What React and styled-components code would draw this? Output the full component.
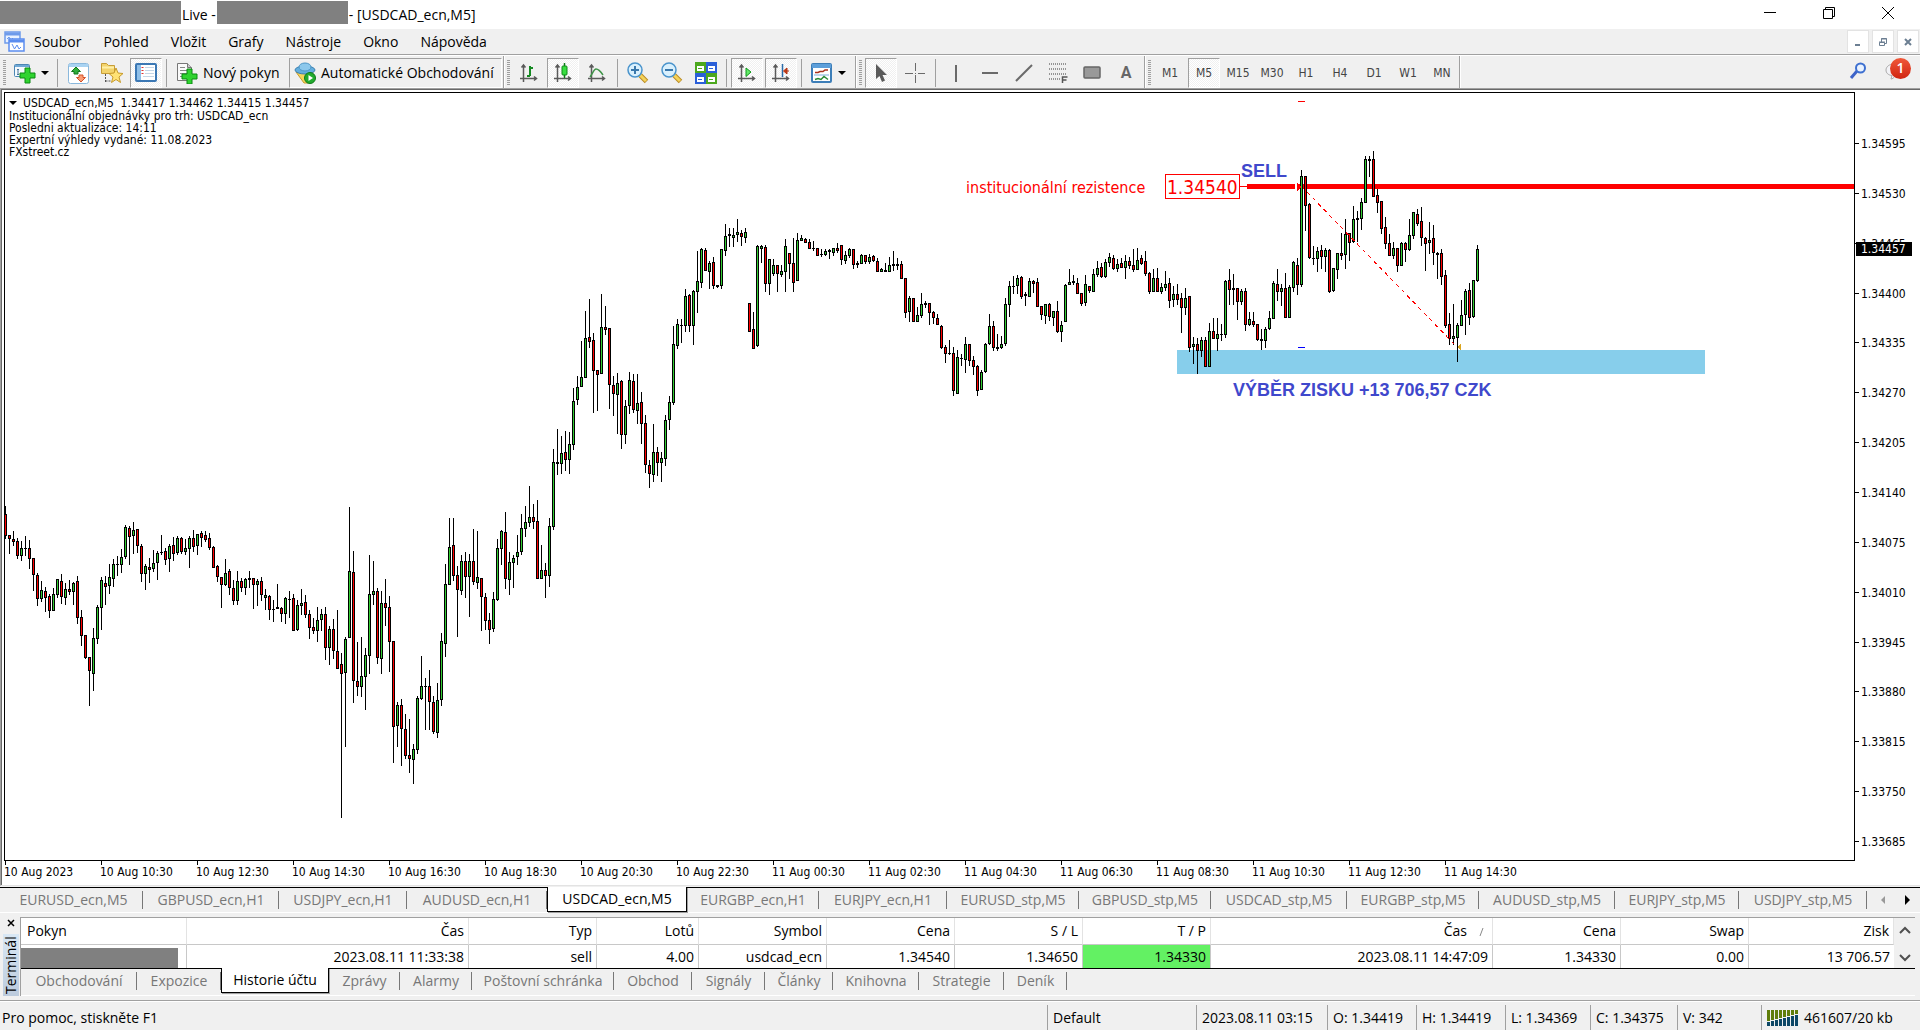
//Library
import styled, { createGlobalStyle, css } from "styled-components";
import { useState } from "react";

//Candles, four pixels apart. Each one is: high, body top, body bottom, low, kind
//(g = up, r = down, d = doji), in thirds of a pixel below the base of its block.
const blocks = [
  {
    base: 387,
    rows: `78 102 168 177 r,165 165 177 222 r,153 177 186 198 r,174 183 228 237 r,183 204 228 243 g,
168 204 207 228 d,180 204 237 267 r,234 234 285 333 r,279 285 357 378 r,303 330 357 366 g,
321 333 354 396 r,342 348 393 414 r,324 342 393 393 g,297 297 345 354 g,282 303 351 372 r,
309 327 354 375 g,300 327 336 345 r,306 309 336 375 g,288 303 414 432 r,390 411 468 498 r,
465 465 534 537 r,531 531 573 678 r,444 474 582 633 g,375 381 477 492 g,291 300 384 450 g,
288 309 321 375 r,252 291 318 342 g,237 252 297 321 g,228 252 255 288 d,207 231 255 279 g,
135 141 231 237 g,138 144 171 255 r,126 150 168 222 g,147 147 198 219 r,192 198 282 306 r,
252 258 282 330 g,234 261 270 309 r,210 249 267 276 g,213 219 249 300 g,165 216 219 225 d,
204 213 240 255 r,192 198 237 276 g,171 195 222 243 r,168 174 219 225 g,171 174 216 222 r,
177 204 216 225 g,168 174 207 264 g,150 174 201 216 r,162 162 198 225 g,153 159 174 201 r,
153 165 180 186 r,159 174 204 210 r,198 201 264 264 r,255 258 291 306 r,291 291 315 384 r,
237 279 315 318 g,267 273 324 345 r,300 324 363 375 r,273 303 363 375 g,294 303 324 336 r,
294 297 324 345 g,273 294 300 324 d,294 294 315 387 r,297 303 315 378 g,291 303 345 363 r,
327 345 354 390 g,345 348 390 420 r,360 387 390 426 d,312 381 387 387 d,381 384 402 426 r,
351 354 402 432 g,333 357 360 414 d,342 354 453 453 r,360 375 450 453 g,327 369 378 405 g,
345 366 405 414 r,390 402 444 477 r,414 441 453 462 r,381 420 453 486 g,387 402 420 453 g,
381 402 504 540 r,438 447 504 555 g,417 447 513 537 r,390 513 567 567 r,519 552 582 1014 r,
471 477 579 801 g,81 273 474 474 g,213 276 603 669 r,486 603 621 648 r,471 588 621 651 g,
504 525 591 690 g,225 342 528 582 g,243 333 345 375 g,324 333 534 552 r,333 369 537 582 g,
297 369 384 438 r,348 381 486 576 r,483 483 741 849 r,666 675 738 801 g,657 675 747 858 r,
702 747 828 837 r,717 825 837 879 r,792 807 840 912 g,648 654 810 822 g,528 618 657 660 g,
594 618 621 750 d,570 618 666 750 r,648 666 756 762 r,609 660 759 774 g,459 483 660 678 g,
252 312 492 531 g,114 201 315 315 g,114 195 288 303 r,258 285 330 471 r,225 243 333 345 g,
216 243 291 354 r,222 243 291 411 g,147 243 306 315 r,153 291 309 327 g`,
  },
  {
    base: 107,
    rows: `1134 1134 1191 1293 r,1179 1191 1263 1290 r,1239 1260 1290 1332 r,1176 1197 1287 1296 g,
1017 1044 1200 1203 g,990 993 1047 1095 g,936 996 1137 1167 r,1056 1086 1140 1185 g,
1065 1074 1089 1164 g,1005 1056 1071 1095 g,942 984 1056 1065 g,918 966 987 1011 g,
858 951 969 981 g,912 951 966 987 r,900 963 1137 1137 r,1035 1110 1137 1137 g,
1089 1110 1128 1194 r,954 978 1128 1161 g,747 786 981 990 g,687 786 792 825 d,
708 759 792 822 g,693 756 780 813 r,696 732 780 822 g,564 603 735 750 g,528 561 600 615 g,
423 531 561 561 g,333 414 534 534 g,297 411 426 444 r,399 420 513 639 r,510 510 525 633 r,
282 381 522 522 g,318 381 390 405 r,384 384 555 627 r,528 555 582 648 r,519 549 585 702 g,
540 543 705 747 r,600 618 705 732 g,516 540 618 642 g,522 543 630 639 r,522 609 633 672 g,
576 606 672 732 r,645 669 795 819 r,780 795 822 864 r,672 756 825 846 g,741 756 789 828 r,
756 774 789 846 g,645 660 777 798 g,588 606 660 690 g,378 432 609 615 g,357 372 438 447 g,
357 375 378 429 d,267 288 378 396 g,282 285 378 396 r,270 273 378 435 g,153 243 276 339 g,
144 147 249 264 g,144 150 213 213 r,183 189 216 267 g,171 186 258 267 r,255 255 261 264 d,
147 147 258 267 g,72 108 153 168 g,84 102 108 141 d,84 105 114 141 g,57 96 105 126 g,
90 99 111 138 r,84 96 114 129 g,309 309 396 396 r,336 387 447 447 r,135 138 438 441 g,
135 138 147 189 g,135 141 252 276 r,177 177 252 285 g,177 195 222 228 g,195 195 222 276 r,
195 213 225 231 g,117 138 216 276 g,159 159 192 237 r,114 189 249 276 r,99 120 243 243 g,
105 114 123 123 g,114 117 129 129 r,117 126 147 147 r,123 144 147 153 d,144 144 168 168 r,
147 162 165 171 d,147 153 165 168 g,147 150 156 177 d,144 144 159 168 g,129 144 153 159 r,
135 135 180 195 r,153 165 183 192 g,144 147 168 174 g,147 147 195 207 r,183 189 195 204 d,
162 165 192 192 g,165 165 186 192 r,162 171 186 192 g,165 168 183 186 r,174 183 216 216 r,
204 207 216 216 g,189 210 216 216 d,171 195 216 216 g,153 192 198 213 d,174 192 198 210 d,
183 192 237 237 r,234 234 339 354 r,288 294 336 366 g,294 294 366 366 r,321 345 366 366 g,
279 312 348 354 g,303 309 315 324 d,309 309 339 375 r,333 336 354 372 r,342 354 375 375 r,
375 378 444 447 r,435 441 462 489 r,420 459 462 465 d,441 459 573 588 r,450 471 582 582 g,
462 474 477 498 d,411 432 480 519 g,432 432 483 498 r,468 480 501 525 r,495 498 573 588 r,
510 516 570 570 g,429 432 516 519 g,342 378 432 435 g,363 378 444 453 r,402 441 447 453 d,
408 432 444 447 g,294 312 432 438 g,243 258 315 351 g,228 258 261 282 d,225 234 258 282 g,
228 231 291 297 r,276 282 288 318 d,234 243 291 291 g,240 243 252 279 r,234 246 321 321 r,
318 318 345 360 r,312 312 348 372 g,309 312 351 363 r,333 333 354 378 g,303 333 396 399 r,
363 375 396 426 g,252 255 366 366 g,207 246 255 255 g,225 243 249 255 d,234 249 282 282 r,
279 279 312 318 r,225 252 309 318 g,258 258 273 279 r,207 222 276 276 g,183 204 225 231 g,
189 201 231 234 r,177 186 231 234 g,159 171 189 201 g,165 174 207 210 r,177 192 207 216 g,
174 189 204 204 r,165 183 204 237 g,171 183 198 207 r,147 195 210 216 r,144 180 210 210 g,
165 174 192 195 r,153 183 222 228 r,216 219 276 282 r,207 234 276 276 g,204 234 276 276 r,
249 261 276 282 g,213 252 264 273 g,234 249 303 324 r,258 282 300 321 g,252 282 300 315 r,
279 294 324 399 r,264 294 324 345 g,288 288 444 456 r,411 432 441 492 g,414 432 453 522 r,
411 420 453 471 g,411 420 501 501 r,369 393 501 501 g,354 393 417 417 r,354 402 417 453 g`,
  },
  {
    base: -3,
    rows: `702 732 735 753 d,570 573 735 744 g,537 570 600 645 r,552 594 600 645 d,594 594 636 690 r,
597 603 636 645 g,594 603 705 723 r,666 687 705 708 g,666 693 705 711 r,702 702 750 753 r,
717 747 753 780 d,711 717 753 774 g,663 684 717 720 g,573 579 687 687 g,537 582 606 633 r,
582 594 606 648 g,549 594 684 684 r,585 591 684 684 g,513 516 594 606 g,504 525 585 615 r,
240 258 585 591 g,258 258 348 423 r,339 342 504 507 r,468 504 507 525 d,471 483 507 546 g,
465 480 501 537 r,474 480 501 546 g,477 480 606 609 r,534 534 603 606 g,489 489 540 567 g,
429 489 498 510 r,387 432 495 537 g,429 429 459 513 r,348 387 456 459 g,363 384 390 456 d,
324 336 387 420 g,198 207 339 339 g,198 207 213 261 d,183 207 321 321 r,297 315 339 369 r,
333 333 417 432 r,381 411 462 477 r,432 459 498 498 r,456 474 498 507 g,474 474 528 546 r,
456 459 528 528 g,456 459 480 516 r,387 435 480 483 g,366 366 438 447 g,357 372 402 408 r,
351 393 444 468 r,441 444 462 543 r,396 450 459 492 g,405 444 489 525 r,486 489 495 567 d,
477 489 561 585 r,540 555 708 714 r,669 702 747 765 r,642 738 747 765 g,699 705 744 816 g,
630 675 708 708 g,597 603 675 735 g,579 600 684 705 r,570 570 681 684 g,465 477 573 576 g`,
  },
];

const candles = blocks.flatMap(({ base, rows }) =>
  rows.split(",").map((row) => {
    const [high, top, bottom, low, kind] = row.trim().split(" ");
    const y = (value) => base + Math.round(value / 3);
    return { high: y(high), top: y(top), bottom: y(bottom), low: y(low), kind };
  })
);

const prices = Array.from({ length: 15 }, (_, i) => ({
  y: 52 + Math.round((i * 698) / 14),
  label: ((134595 - i * 65) / 100000).toFixed(5),
}));

const times = [
  "10 Aug 2023",
  "10 Aug 10:30",
  "10 Aug 12:30",
  "10 Aug 14:30",
  "10 Aug 16:30",
  "10 Aug 18:30",
  "10 Aug 20:30",
  "10 Aug 22:30",
  "11 Aug 00:30",
  "11 Aug 02:30",
  "11 Aug 04:30",
  "11 Aug 06:30",
  "11 Aug 08:30",
  "11 Aug 10:30",
  "11 Aug 12:30",
  "11 Aug 14:30",
];

const menu = ["Soubor", "Pohled", "Vložit", "Grafy", "Nástroje", "Okno", "Nápověda"];
const frames = ["M1", "M5", "M15", "M30", "H1", "H4", "D1", "W1", "MN"];

const chartTabs = [
  ["EURUSD_ecn,M5", 139],
  ["GBPUSD_ecn,H1", 136],
  ["USDJPY_ecn,H1", 128],
  ["AUDUSD_ecn,H1", 140],
  ["USDCAD_ecn,M5", 140],
  ["EURGBP_ecn,H1", 132],
  ["EURJPY_ecn,H1", 128],
  ["EURUSD_stp,M5", 132],
  ["GBPUSD_stp,M5", 132],
  ["USDCAD_stp,M5", 136],
  ["EURGBP_stp,M5", 132],
  ["AUDUSD_stp,M5", 136],
  ["EURJPY_stp,M5", 124],
  ["USDJPY_stp,M5", 128],
];

const terminalTabs = [
  ["Obchodování", 116],
  ["Expozice", 84],
  ["Historie účtu", 108],
  ["Zprávy", 71],
  ["Alarmy", 72],
  ["Poštovní schránka", 142],
  ["Obchod", 78],
  ["Signály", 73],
  ["Články", 68],
  ["Knihovna", 86],
  ["Strategie", 85],
  ["Deník", 63],
];

const columns = [
  ["Pokyn", 166],
  ["Čas", 282],
  ["Typ", 128],
  ["Lotů", 102],
  ["Symbol", 128],
  ["Cena", 128],
  ["S / L", 128],
  ["T / P", 128],
  ["Čas", 282],
  ["Cena", 128],
  ["Swap", 128],
  ["Zisk", null],
];

const order = [
  "",
  "2023.08.11 11:33:38",
  "sell",
  "4.00",
  "usdcad_ecn",
  "1.34540",
  "1.34650",
  "1.34330",
  "2023.08.11 14:47:09",
  "1.34330",
  "0.00",
  "13 706.57",
];

//Icons
const Icon = ({ w = 20, h = 20, children }) => (
  <svg width={w} height={h} viewBox={`0 0 ${w} ${h}`} aria-hidden="true">
    {children}
  </svg>
);

const Plus = ({ x, y }) => (
  <path
    d={`M${x + 5} ${y}h5v5h5v5h-5v5h-5v-5h-5v-5h5z`}
    fill="#2fd32f"
    stroke="#0b8a12"
  />
);

const Axes = () => (
  <path
    d="M4.500 2v17M1 15.500h16M2.500 4.500l2-2.500 2 2.500M15 13.500l2.500 2-2.500 2"
    fill="none"
    stroke="#5a5a5a"
    strokeWidth="1.500"
  />
);

const MenuIcon = () => (
  <Icon w={22} h={22}>
    <rect x="1" y="1" width="15" height="11" fill="#eaf2ff" stroke="#6e9bea" strokeWidth="1.500" />
    <path d="M1 3h15" stroke="#6e9bea" strokeWidth="3" />
    <path d="M3 8l2-2 2 3 2-2" fill="none" stroke="#6e9bea" />
    <rect x="5" y="8" width="15" height="12" fill="#fff" stroke="#5b8def" strokeWidth="1.500" />
    <path d="M5 10h15" stroke="#5b8def" strokeWidth="3" />
    <path d="M8 13l2.500 5 2.500-4 2 4 2-2" fill="none" stroke="#5b8def" />
  </Icon>
);

const NewChartIcon = () => (
  <Icon w={23} h={22}>
    <rect x="1.500" y="2.500" width="15" height="12" rx="1" fill="#f4f9fd" stroke="#4b86b4" />
    <path d="M2 4h14" stroke="#6fa8d6" strokeWidth="2" />
    <path d="M5 7v6M4 8l1-1 1 1M4 12l1 1 1-1M8 12h3" fill="none" stroke="#47749a" />
    <Plus x={7} y={6} />
  </Icon>
);

const MarketIcon = () => (
  <Icon w={21} h={21}>
    <rect x=".500" y=".500" width="20" height="20" rx="2" fill="#fff" stroke="#8ab8dc" />
    <path d="M1 2.500h19" stroke="#a9d3f2" strokeWidth="3" />
    <path d="M8 4l4.500 4.500H10V11H6V8.500H3.500z" fill="#2fae3a" stroke="#14771d" />
    <path d="M13 19l4.500-4.500H15V12h-4v2.500H8.500z" fill="#fb9d75" stroke="#d2522a" />
  </Icon>
);

const NavigatorIcon = () => (
  <Icon w={24} h={22}>
    <path d="M1.500 1.500h5l2 2h6v8h-13z" fill="#f3d36c" stroke="#c79d36" />
    <path d="M2 5.500h12" stroke="#fff0a8" strokeWidth="2" />
    <path d="M5.500 12v9M5.500 19h6" stroke="#555" strokeDasharray="2 1" />
    <path
      d="M16 6l2 5 5 .5-4 3.500 1.500 5.500-4.500-3-4.500 3 1.500-5.500-4-3.500 5-.5z"
      fill="#ffe274"
      stroke="#c79a2a"
    />
  </Icon>
);

const TerminalIcon = () => (
  <Icon w={22} h={20}>
    <rect x="1" y="1" width="20" height="17" rx="1" fill="#fff" stroke="#3c78b4" strokeWidth="2" />
    <path d="M4 2v15" stroke="#8fbfe8" strokeWidth="4" />
    <path d="M7.500 4v1M7.500 7v1M7.500 10v1" stroke="#d33" strokeWidth="2" />
    <path d="M10 4.500h9M10 7.500h9M10 10.500h9M8 13.500h11" stroke="#c5d6e6" />
  </Icon>
);

const OrderIcon = () => (
  <Icon w={22} h={22}>
    <path d="M1.500 1.500h10l4 4v13h-14z" fill="#fafafa" stroke="#777" />
    <path d="M11.500 1.500v4h4" fill="#ccc" stroke="#777" />
    <path d="M4 5.500h5M4 8.500h8M4 11.500h8M4 14.500h4" stroke="#888" />
    <Plus x={6} y={7} />
  </Icon>
);

const RobotIcon = () => (
  <Icon w={22} h={22}>
    <path d="M2 10l8 11h4l5-11z" fill="#f4d55b" stroke="#c69a2c" />
    <ellipse cx="11" cy="8" rx="10" ry="4" fill="#62aede" stroke="#397fb0" />
    <ellipse cx="11" cy="5" rx="6" ry="4" fill="#8cc8ec" stroke="#4d96c6" />
    <circle cx="16" cy="16" r="5.500" fill="#22ab2e" stroke="#0d7a18" />
    <path d="M14.500 13l4.500 3-4.500 3z" fill="#fff" />
  </Icon>
);

const BarsIcon = () => (
  <Icon>
    <Axes />
    <path d="M8 13h3M11 3v10M11 5h3" fill="none" stroke="#158a22" strokeWidth="2" />
  </Icon>
);

const CandleIcon = () => (
  <Icon>
    <Axes />
    <path d="M11.500 0v15" stroke="#0d7a18" strokeWidth="1.500" />
    <rect x="9" y="3" width="5" height="9" rx="1" fill="#37dd3f" stroke="#0d8a18" />
  </Icon>
);

const LineIcon = () => (
  <Icon>
    <Axes />
    <path d="M3 14c3-4 4-8 6-8s5 3 7 6" fill="none" stroke="#3f9448" strokeWidth="1.500" />
  </Icon>
);

const LensIcon = ({ plus }) => (
  <Icon w={22} h={22}>
    <path d="M13 13l6.500 6.500" stroke="#b98a22" strokeWidth="5" />
    <path d="M13 13l6 6" stroke="#f5d35a" strokeWidth="3" />
    <circle cx="8" cy="8" r="7" fill="#d9f0fd" stroke="#4a94cc" strokeWidth="1.500" />
    <path d={plus ? "M4 8h8M8 4v8" : "M4 8h8"} stroke="#3a78ac" strokeWidth="2" />
  </Icon>
);

const TileIcon = () => (
  <Icon w={22} h={22}>
    {[
      [0, 0, "#4ca81e"],
      [11, 0, "#2a5fd8"],
      [0, 11, "#2a5fd8"],
      [11, 11, "#4ca81e"],
    ].map(([x, y, color]) => (
      <g key={`${x}-${y}`}>
        <rect x={x} y={y} width="11" height="11" fill={color} />
        <rect x={x + 2} y={y + 4} width="7" height="5" fill="#fff" />
        <path d={`M${x + 3} ${y + 6.5}h4`} stroke={color} />
      </g>
    ))}
  </Icon>
);

const ScrollIcon = () => (
  <Icon>
    <Axes />
    <path d="M9 5l5 4-5 4.500z" fill="#62ea68" stroke="#119a1c" />
  </Icon>
);

const ShiftIcon = () => (
  <Icon>
    <Axes />
    <path d="M11.500 1v13" stroke="#2a6ba8" strokeWidth="1.500" />
    <path d="M18 8h-4M16 5l-3.500 3 3.500 3z" fill="#d2441c" stroke="#b03010" />
  </Icon>
);

const TemplateIcon = () => (
  <Icon w={22} h={21}>
    <rect x="1" y="1" width="19" height="18" rx="1" fill="#fff" stroke="#3d7eb8" strokeWidth="2" />
    <path d="M1 3h19" stroke="#5d9fda" strokeWidth="4" />
    <path d="M3 12h15" stroke="#7aaedb" />
    <path d="M4 9.500h3l2-1h3l2-1.500h3" fill="none" stroke="#a8321c" strokeWidth="1.500" />
    <path d="M4 16.500l3-1 3 1 3-3 4 3" fill="none" stroke="#2a8a34" strokeWidth="1.500" />
  </Icon>
);

const CursorIcon = () => (
  <Icon w={14} h={20}>
    <path d="M2 1v15l3.500-3 2.500 6 3-1.500-2.500-5.500h4.500z" fill="#5a5a5a" />
  </Icon>
);

const CrossIcon = () => (
  <Icon>
    <path d="M10.500 0v8M10.500 12v8M0 10.500h8M13 10.500h7M10 10.500h1" stroke="#6a6a6a" />
  </Icon>
);

const StrokeIcon = ({ d }) => (
  <Icon>
    <path d={d} stroke="#6a6a6a" strokeWidth="2" />
  </Icon>
);

const FiboIcon = () => (
  <Icon w={20} h={22}>
    <path d="M1 2h18M1 7h18M1 12h18M1 17h12" stroke="#777" strokeWidth="1.500" strokeDasharray="1 1" />
    <path d="M14.500 21v-6h5M14.500 18h4" fill="none" stroke="#555" strokeWidth="1.500" />
  </Icon>
);

const BoxIcon = () => (
  <Icon>
    <rect x="2" y="4" width="16" height="11" rx="1" fill="#999" stroke="#666" strokeWidth="1.500" />
  </Icon>
);

const SearchIcon = () => (
  <Icon w={18} h={18}>
    <path d="M8 9l-6 7" stroke="#3d63c8" strokeWidth="3" />
    <circle cx="11.500" cy="6" r="4.500" fill="#eaf3ff" stroke="#3d6fd0" strokeWidth="2" />
  </Icon>
);

const BubbleIcon = () => (
  <Icon w={20} h={18}>
    <path
      d="M9 2c5 0 8 2.500 8 6s-3 6-7 6c-1 2-3 3-4 3l1-3.500C3 13 1 11 1 8s3-6 8-6z"
      fill="#f2f2f6"
      stroke="#aaa"
    />
  </Icon>
);

function App() {
  //States
  const [frame, setFrame] = useState("M5");
  const [chart, setChart] = useState("USDCAD_ecn,M5");
  const [panel, setPanel] = useState("Historie účtu");

  return (
    <Window>
      <GlobalStyle />
      <TitleBar>
        <Masked $w={181} />
        <span>Live -</span>
        <Masked $w={131} />
        <Caption>- [USDCAD_ecn,M5]</Caption>
        <WindowButton aria-label="Minimalizovat">
          <Icon w={14} h={14}>
            <path d="M1 6.500h12" stroke="#000" />
          </Icon>
        </WindowButton>
        <WindowButton aria-label="Obnovit">
          <Icon w={14} h={14}>
            <path d="M1.500 3.500h9v9h-9zM3.500 3.500v-2h9v9h-2" fill="none" stroke="#000" />
          </Icon>
        </WindowButton>
        <WindowButton aria-label="Zavřít">
          <Icon w={14} h={14}>
            <path d="M1 1l12 12M13 1L1 13" stroke="#000" />
          </Icon>
        </WindowButton>
      </TitleBar>

      <MenuBar>
        <MenuIcon />
        <MenuItems>
          {menu.map((item) => (
            <button key={item}>{item}</button>
          ))}
        </MenuItems>
        <ChildButton aria-label="Minimalizovat graf">
          <Icon w={8} h={10}>
            <path d="M1 8h5" stroke="#6c7f92" strokeWidth="2" />
          </Icon>
        </ChildButton>
        <ChildButton aria-label="Obnovit graf">
          <Icon w={10} h={10}>
            <path d="M1.500 5.500h5v3h-5zM3.500 5V1.500h5v5H7M1 5h6M3 2h6" fill="none" stroke="#6c7f92" />
          </Icon>
        </ChildButton>
        <ChildButton aria-label="Zavřít graf">
          <Icon w={10} h={10}>
            <path d="M2 2l6 6M8 2L2 8" stroke="#6c7f92" strokeWidth="2" />
          </Icon>
        </ChildButton>
      </MenuBar>

      <ToolBar>
        <Group $w={504}>
          <Grip />
          <Tool $w={44} aria-label="Nový graf">
            <NewChartIcon />
            <Arrow />
          </Tool>
          <Divider />
          <Tool $w={32} aria-label="Sledování trhu">
            <MarketIcon />
          </Tool>
          <Tool $w={32} aria-label="Navigátor">
            <NavigatorIcon />
          </Tool>
          <Tool $w={32} $on aria-label="Terminál">
            <TerminalIcon />
          </Tool>
          <Divider />
          <Tool $w={116} $label>
            <OrderIcon />
            Nový pokyn
          </Tool>
          <Tool $w={213} $label $on>
            <RobotIcon />
            Automatické Obchodování
          </Tool>
        </Group>
        <Group $w={352}>
          <Grip />
          <Tool $w={32} aria-label="Sloupcový graf">
            <BarsIcon />
          </Tool>
          <Tool $w={32} $on aria-label="Svíčkový graf">
            <CandleIcon />
          </Tool>
          <Tool $w={32} aria-label="Čárový graf">
            <LineIcon />
          </Tool>
          <Divider />
          <Tool $w={32} aria-label="Přiblížit">
            <LensIcon plus />
          </Tool>
          <Tool $w={32} aria-label="Oddálit">
            <LensIcon />
          </Tool>
          <Tool $w={32} aria-label="Okna vedle sebe">
            <TileIcon />
          </Tool>
          <Divider />
          <Tool $w={32} $on aria-label="Automatický posun">
            <ScrollIcon />
          </Tool>
          <Tool $w={32} $on aria-label="Odsazení grafu">
            <ShiftIcon />
          </Tool>
          <Divider />
          <Tool $w={44} aria-label="Šablony">
            <TemplateIcon />
            <Arrow />
          </Tool>
        </Group>
        <Group $w={289}>
          <Grip />
          <Tool $w={32} $on aria-label="Kurzor">
            <CursorIcon />
          </Tool>
          <Tool $w={32} aria-label="Nitkový kříž">
            <CrossIcon />
          </Tool>
          <Divider />
          <Tool $w={32} aria-label="Svislá čára">
            <StrokeIcon d="M10 2v17" />
          </Tool>
          <Tool $w={32} aria-label="Vodorovná čára">
            <StrokeIcon d="M2 10h16" />
          </Tool>
          <Tool $w={32} aria-label="Trendová čára">
            <StrokeIcon d="M2 18L18 2" />
          </Tool>
          <Tool $w={32} aria-label="Fibonacci">
            <FiboIcon />
          </Tool>
          <Tool $w={32} aria-label="Obdélník">
            <BoxIcon />
          </Tool>
          <Tool $w={32} $letter>
            A
          </Tool>
        </Group>
        <Group $w={315}>
          <Grip />
          {frames.map((item) => (
            <Tool $w={32} $small key={item} $on={item === frame} onClick={() => setFrame(item)}>
              {item}
            </Tool>
          ))}
        </Group>
        <Tray>
          <Tool $w={32} aria-label="Hledat">
            <SearchIcon />
          </Tool>
          <Tool $w={38} aria-label="Zprávy">
            <BubbleIcon />
            <Badge>1</Badge>
          </Tool>
        </Tray>
      </ToolBar>

      <ChartWindow>
        <Plot>
          <CandleChart />
          <Comment>
            <h1>
              <Arrow />
              USDCAD_ecn,M5&nbsp; 1.34417 1.34462 1.34415 1.34457
            </h1>
            <p>Institucionální objednávky pro trh: USDCAD_ecn</p>
            <p>Posledni aktualizace: 14:11</p>
            <p>Expertní výhledy vydané: 11.08.2023</p>
            <p>FXstreet.cz</p>
          </Comment>
        </Plot>
        <PriceScale />
        <TimeScale>
          {times.map((time) => (
            <span key={time}>{time}</span>
          ))}
        </TimeScale>
      </ChartWindow>

      <ChartTabs>
        {chartTabs.map(([name, width]) => (
          <Tab key={name} $w={width} $active={name === chart} onClick={() => setChart(name)}>
            {name}
          </Tab>
        ))}
        <Pager>
          <button aria-label="Předchozí">
            <Icon w={6} h={10}>
              <path d="M5 1v8L1 5z" fill="#999" />
            </Icon>
          </button>
          <button aria-label="Další">
            <Icon w={6} h={10}>
              <path d="M1 0v10l5-5z" fill="#000" />
            </Icon>
          </button>
        </Pager>
      </ChartTabs>

      <Terminal>
        <Side>
          <button aria-label="Zavřít terminál">
            <Icon w={8} h={8}>
              <path d="M1 1l6 6M7 1L1 7" stroke="#000" strokeWidth="1.500" />
            </Icon>
          </button>
          <SideTitle>Terminál</SideTitle>
        </Side>
        <Main>
          <TableArea>
            <Orders>
              <colgroup>
                {columns.map(([, width], i) => (
                  <Col key={i} $w={width} />
                ))}
              </colgroup>
              <thead>
                <tr>
                  {columns.map(([name], i) => (
                    <th key={i} scope="col">
                      {name}
                      {i === 8 && (
                        <Icon w={21} h={8}>
                          <path d="M13 8l3-8" stroke="#888" />
                        </Icon>
                      )}
                    </th>
                  ))}
                </tr>
              </thead>
              <tbody>
                <tr>
                  {order.map((value, i) => (
                    <td key={i} className={i === 7 ? "hit" : i === 0 ? "masked" : undefined}>
                      {i === 0 ? <div /> : value}
                    </td>
                  ))}
                </tr>
              </tbody>
            </Orders>
            <ScrollBar>
              <button aria-label="Nahoru">
                <Icon w={12} h={8}>
                  <path d="M1 7l5-5 5 5" fill="none" stroke="#505050" strokeWidth="2" />
                </Icon>
              </button>
              <button aria-label="Dolů">
                <Icon w={12} h={8}>
                  <path d="M1 1l5 5 5-5" fill="none" stroke="#505050" strokeWidth="2" />
                </Icon>
              </button>
            </ScrollBar>
          </TableArea>
          <PanelTabs>
            {terminalTabs.map(([name, width]) => (
              <Tab key={name} $w={width} $active={name === panel} onClick={() => setPanel(name)}>
                {name}
              </Tab>
            ))}
          </PanelTabs>
        </Main>
      </Terminal>

      <StatusBar>
        <Help>Pro pomoc, stiskněte F1</Help>
        <Cell $w={149}>Default</Cell>
        <Cell $w={131}>2023.08.11 03:15</Cell>
        <Cell $w={89}>O: 1.34419</Cell>
        <Cell $w={89}>H: 1.34419</Cell>
        <Cell $w={85}>L: 1.34369</Cell>
        <Cell $w={87}>C: 1.34375</Cell>
        <Cell $w={84}>V: 342</Cell>
        <Cell $w={159}>
          <Icon w={32} h={16}>
            {Array.from({ length: 8 }, (_, i) => (
              <g key={i}>
                <rect x={i * 4} y="0" width="3" height={11 - i} fill="#5f7d0a" />
                <rect x={i * 4} y={12 - i} width="3" height={4 + i} fill="#0d4766" />
              </g>
            ))}
          </Icon>
          461607/20 kb
        </Cell>
      </StatusBar>
    </Window>
  );
}

function CandleChart() {
  return (
    <svg width="100%" height="100%" shapeRendering="crispEdges">
      <rect x="1172" y="257" width="528" height="24" fill="#87ceeb" />
      <rect x="1242" y="91" width="100%" height="5" fill="#f00" />
      <path d="M1235 93.500h8" stroke="#f00" />
      {candles.map(({ high, top, bottom, low, kind }, i) => (
        <g key={i}>
          <rect x={i * 4} y={high} width="1" height={low - high} />
          <rect x={i * 4 - 1} y={top} width="3" height={bottom - top} />
          {kind !== "d" && (
            <rect
              x={i * 4}
              y={top + 1}
              width="1"
              height={Math.max(bottom - top - 2, 0)}
              fill={kind === "g" ? "#32cd32" : "#f00"}
            />
          )}
        </g>
      ))}
      <path d="M1302 99L1450 252" stroke="#f00" strokeDasharray="4 4" />
      <path d="M1293 8.500h7" stroke="#f00" />
      <path d="M1293 254.500h7" stroke="#00f" />
      <rect x="1290" y="91" width="2" height="5" fill="#fff" />
      <path d="M1292 90l5 4-5 4z" fill="#f00" />
      <path d="M1456 251v7l-4-4z" fill="#daa520" />
      <rect x="1160.500" y="81.500" width="74" height="24" fill="#fff" stroke="#f00" />
      <Note x="1162" y="101" $size={19}>
        1.34540
      </Note>
      <Note x="961" y="100" $size={16}>
        institucionální rezistence
      </Note>
      <Signal x="1236" y="84">
        SELL
      </Signal>
      <Signal x="1228" y="303">
        VÝBĚR ZISKU +13 706,57 CZK
      </Signal>
    </svg>
  );
}

function PriceScale() {
  return (
    <Prices width="100%" height="100%">
      {prices.map(({ y, label }) => (
        <g key={label}>
          <path d={`M0 ${y - 0.5}h4`} stroke="#000" />
          <text x="6" y={y + 4}>
            {label}
          </text>
        </g>
      ))}
      <rect x="1" y="150" width="56" height="14" />
      <text x="6" y="161" fill="#fff">
        1.34457
      </text>
    </Prices>
  );
}

//Styles
const chartFont = `"DejaVu Sans Condensed", "DejaVu Sans", sans-serif`;

const GlobalStyle = createGlobalStyle`
  * {
    box-sizing: border-box;
  }

  body {
    margin: 0;
    font: 14px/20px "Open Sans", "Noto Sans", sans-serif;
    color: #000;
    background-color: #f0f0f0;
  }

  button {
    margin: 0;
    padding: 0;
    border: 0;
    background: none;
    color: inherit;
    font: inherit;
    white-space: nowrap;
  }

  svg {
    flex-shrink: 0;
  }
`;

const Window = styled.div`
  min-height: 100vh;
  display: flex;
  flex-direction: column;
  overflow: hidden;
`;

const TitleBar = styled.header`
  height: 29px;
  padding-right: 3px;
  display: flex;
  align-items: center;
  gap: 1px;
  background-color: #fff;
  white-space: pre;
`;

const Masked = styled.div`
  width: ${({ $w }) => $w}px;
  height: 23px;
  margin-bottom: 4px;
  background-color: #808080;
`;

const Caption = styled.span`
  flex: 1;
`;

const WindowButton = styled.button`
  width: 58px;
  height: 29px;
`;

const MenuBar = styled.nav`
  height: 26px;
  padding: 0 1px 0 4px;
  display: flex;
  align-items: center;
  gap: 3px;
  border-bottom: 1px solid #a0a0a0;
`;

const MenuItems = styled.div`
  flex: 1;
  padding-left: 5px;
  display: flex;
  gap: 22px;
`;

const ChildButton = styled.button`
  width: 22px;
  height: 23px;
  background-color: #fff;
  border: 1px solid #e3e3e3;
`;

const ToolBar = styled.div`
  height: 33px;
  display: flex;
  border-top: 1px solid #fff;
`;

const Group = styled.div`
  width: ${({ $w }) => $w}px;
  padding: 2px 0 0;
  display: flex;
  gap: 2px;
  border-right: 1px solid #a0a0a0;
  box-shadow: 1px 0 #fff;
`;

const Grip = styled.div`
  width: 3px;
  margin: 2px 1px 2px 3px;
  background: repeating-linear-gradient(#a0a0a0 0 1px, #f0f0f0 1px 2px);
`;

const Divider = styled.div`
  width: 1px;
  margin: 1px 2px;
  background-color: #a0a0a0;
`;

const Tool = styled.button`
  position: relative;
  width: ${({ $w }) => $w}px;
  height: 30px;
  display: flex;
  align-items: center;
  justify-content: center;
  gap: 5px;
  border: 1px solid transparent;

  ${({ $on, $label }) =>
    $on &&
    css`
      border-color: #a0a0a0 #fff #fff #a0a0a0;
      background: ${$label
        ? "#f0f0f0"
        : "repeating-conic-gradient(#fff 0 25%, #f0f0f0 0 50%) 0 0 / 2px 2px"};
    `}

  ${({ $label }) =>
    $label &&
    css`
      justify-content: flex-start;
      padding-left: 4px;
    `}

  ${({ $small }) =>
    $small &&
    css`
      font: 12px/16px ${chartFont};
      color: #444;
    `}

  ${({ $letter }) =>
    $letter &&
    css`
      font: bold 16px/16px Roboto, sans-serif;
      color: #666;
    `}
`;

const Arrow = styled.i`
  border: 4px solid transparent;
  border-top-color: #000;
  border-bottom: 0;
`;

const Tray = styled.div`
  flex: 1;
  padding-right: 6px;
  display: flex;
  justify-content: flex-end;
  gap: 2px;
`;

const Badge = styled.span`
  position: absolute;
  top: 1px;
  right: 2px;
  width: 21px;
  height: 21px;
  border-radius: 50%;
  background: linear-gradient(#f0593a, #d02410);
  color: #fff;
  font-weight: 600;
  text-align: center;
`;

const ChartWindow = styled.main`
  flex: 1;
  padding: 3px 0 0 2px;
  display: grid;
  grid-template-columns: minmax(0, 1fr) 65px;
  grid-template-rows: minmax(769px, 1fr) 24px;
  border-top: 1px solid #a0a0a0;
  border-left: 1px solid #a0a0a0;
  border-bottom: 1px solid #e3e3e3;
  box-shadow: inset 1px 1px #696969;
  background-color: #fff;
  font: 12px/12px ${chartFont};
`;

const Plot = styled.div`
  position: relative;
  margin-left: 1px;
  border: 1px solid #000;
  overflow: hidden;

  svg {
    display: block;
    position: absolute;
  }
`;

const Comment = styled.div`
  position: absolute;
  top: 4px;
  left: 4px;

  h1,
  p {
    margin: 0;
    font: inherit;
  }

  h1 {
    display: flex;
    align-items: center;
    gap: 6px;
    margin-bottom: 1px;
  }
`;

const Note = styled.text`
  font: ${({ $size }) => $size}px ${chartFont};
  fill: #f00;
`;

const Signal = styled.text`
  font: bold 18px "Liberation Sans", sans-serif;
  fill: #3f48cc;
`;

const Prices = styled.svg`
  font: 12px ${chartFont};
  shape-rendering: crispEdges;
`;

const TimeScale = styled.div`
  grid-column: 1 / -1;
  padding-left: 1px;
  display: flex;
  overflow: hidden;

  span {
    flex: 0 0 96px;
    padding-top: 5px;
    background: linear-gradient(#000, #000) 1px 0 / 1px 4px no-repeat;
    white-space: nowrap;
  }
`;

const TabStrip = styled.div`
  display: flex;
  border-top: 1px solid #000;
`;

const ChartTabs = styled(TabStrip)`
  height: 26px;
  margin: 1px 0 4px;
  padding-left: 4px;
  border-bottom: 1px solid #fff;
  background-color: #f0f0f0;
`;

const PanelTabs = styled(TabStrip)`
  height: 28px;
  padding-bottom: 2px;
  border-bottom: 1px solid #fff;
`;

const Tab = styled.button`
  flex: 0 0 ${({ $w }) => $w}px;
  height: 24px;
  position: relative;
  color: #777;

  &::after {
    content: "";
    position: absolute;
    right: 0;
    top: 3px;
    bottom: 3px;
    width: 1px;
    background-color: #777;
  }

  ${({ $active }) =>
    $active &&
    css`
      height: 25px;
      margin-top: -1px;
      background-color: #fff;
      border: 1px solid #000;
      border-top: 0;
      box-shadow: 1px 1px #a0a0a0;
      color: #000;

      &::after {
        display: none;
      }
    `}
`;

const Pager = styled.div`
  flex: 1;
  padding-right: 10px;
  display: flex;
  justify-content: flex-end;
  gap: 18px;
`;

const Terminal = styled.section`
  display: flex;
`;

const Side = styled.div`
  width: 20px;
  padding-left: 2px;
  display: flex;
  flex-direction: column;
  align-items: center;
  gap: 5px;

  button {
    width: 12px;
    height: 12px;
    display: flex;
    align-items: center;
    justify-content: center;
  }
`;

const SideTitle = styled.div`
  width: 16px;
  height: 62px;
  writing-mode: vertical-rl;
  transform: rotate(180deg);
  line-height: 16px;
  text-align: center;
  background: linear-gradient(#bccbdd, #d9e8f5);
`;

const Main = styled.div`
  flex: 1;
  min-width: 0;
  margin-right: 5px;
  border-top: 1px solid #a0a0a0;
  border-left: 1px solid #a0a0a0;
`;

const TableArea = styled.div`
  display: flex;
  background-color: #fff;
`;

const Orders = styled.table`
  flex: 1;
  width: 100%;
  table-layout: fixed;
  border-collapse: separate;
  border-spacing: 0;
  text-align: right;

  th,
  td {
    padding: 0 4px;
    border-right: 1px solid #c8c8c8;
    font-weight: normal;
    white-space: nowrap;
  }

  th {
    height: 27px;
    border-right-color: #e3e3e3;
    border-bottom: 1px solid #c8c8c8;
  }

  th:first-child {
    padding-left: 6px;
    text-align: left;
  }

  td {
    height: 23px;
  }

  td:last-child {
    border-right: 0;
  }

  .hit {
    background-color: #63f163;
  }

  .masked {
    padding: 3px 8px 0 0;
  }

  .masked div {
    height: 20px;
    background-color: #808080;
  }
`;

const Col = styled.col`
  width: ${({ $w }) => ($w ? `${$w}px` : "auto")};
`;

const ScrollBar = styled.div`
  width: 21px;
  display: flex;
  flex-direction: column;
  justify-content: space-between;
  background-color: #f0f0f0;

  button {
    height: 22px;
  }
`;

const StatusBar = styled.footer`
  height: 30px;
  margin-top: 4px;
  padding-top: 2px;
  display: flex;
  border-top: 1px solid #a0a0a0;
  box-shadow: inset 0 1px #fff;
`;

const Cell = styled.div`
  width: ${({ $w }) => $w}px;
  margin-top: 2px;
  padding-left: 5px;
  display: flex;
  align-items: center;
  gap: 5px;
  border-left: 1px solid #a0a0a0;
  white-space: nowrap;
`;

const Help = styled.div`
  flex: 1;
  padding: 5px 2px;
`;

export default App;
